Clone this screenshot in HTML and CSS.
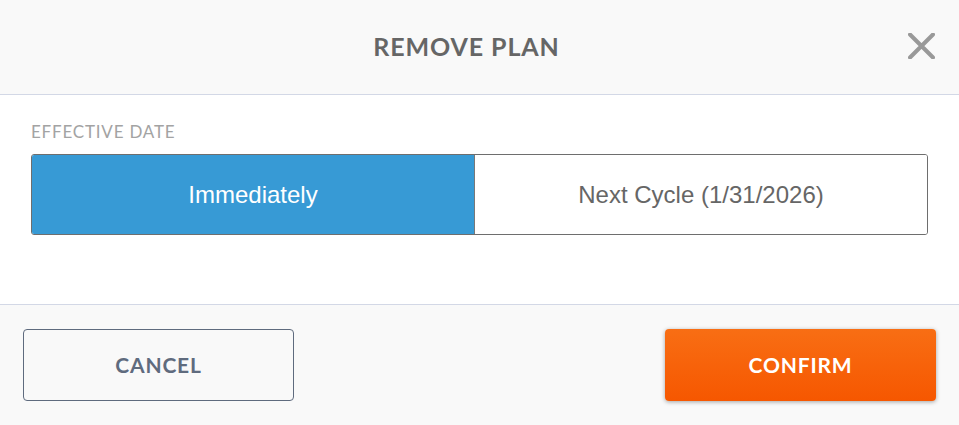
FILE: index.html
```html
<!DOCTYPE html>
<html lang="en">
<head>
<meta charset="utf-8">
<title>Remove Plan</title>
<link rel="stylesheet" href="styles.css">
</head>
<body>
<div class="modal">
  <header class="modal-header">
    <h1 class="modal-title">REMOVE PLAN</h1>
    <button class="close" aria-label="Close">
      <svg width="27" height="26" viewBox="0 0 27 26"><path d="M2 1.5 L25 24.5 M25 1.5 L2 24.5" stroke="#999" stroke-width="4" stroke-linecap="round" fill="none"/></svg>
    </button>
  </header>
  <section class="modal-body">
    <div class="field-label">EFFECTIVE DATE</div>
    <div class="segmented">
      <button class="seg seg-active">Immediately</button>
      <button class="seg">Next Cycle (1/31/2026)</button>
    </div>
  </section>
  <footer class="modal-footer">
    <button class="btn btn-cancel">CANCEL</button>
    <button class="btn btn-confirm">CONFIRM</button>
  </footer>
</div>
</body>
</html>
```

FILE: styles.css
```css
* { box-sizing: border-box; }
html, body { margin: 0; padding: 0; }
body { width: 959px; height: 425px; background: #fff; font-family: Lato, "Open Sans", sans-serif; overflow: hidden; }
.modal { display: flex; flex-direction: column; height: 425px; }
.modal-header {
  height: 95px;
  background: #f9f9f9;
  border-bottom: 1px solid #d3d8e6;
  display: flex; align-items: center; justify-content: center;
  position: relative;
}
.modal-title {
  margin: 0 26px 3px 0;
  font-size: 25px; font-weight: 700; color: #666; letter-spacing: 0.9px;
}
.close {
  position: absolute; right: 24px; top: 33px;
  border: 0; background: none; padding: 0; width: 27px; height: 26px; cursor: pointer;
  display: block;
}
.close svg { display: block; }
.modal-body {
  height: 210px;
  background: #fff;
  border-bottom: 1px solid #d3d8e6;
  padding: 27px 31px 0 31px;
}
.field-label { font-size: 17px; color: #a3a3a3; letter-spacing: 0.8px; line-height: 20px; height: 32px; }
.segmented {
  display: flex; height: 81px;
  border: 1px solid #6e6e6e; border-radius: 3px; overflow: hidden;
}
.seg {
  flex: 1; border: 0; margin: 0; background: #fff; color: #666;
  font-family: "Liberation Sans", Arial, sans-serif; font-size: 24px;
  padding: 0;
}
.seg-active { background: #379ad5; color: #fff; border-right: 1px solid #787878; flex: 0 0 443px; }
.modal-footer {
  flex: 1; background: #f9f9f9;
  display: flex; justify-content: space-between; align-items: flex-start;
  padding: 24px 23px 0 23px;
}
.btn {
  width: 271px; height: 72px; border-radius: 4px;
  font-family: Lato, sans-serif; font-weight: 700; font-size: 21px; letter-spacing: 0.8px;
  padding: 0 0 2px 0;
  cursor: pointer;
}
.btn-cancel { background: #f9f9f9; border: 1px solid #5f6b7e; color: #5f6b7e; }
.btn-confirm {
  border: 0; color: #fff;
  background: linear-gradient(#f86e14, #f65700);
  box-shadow: 0 1px 4px rgba(0,0,0,0.35);
}
```
